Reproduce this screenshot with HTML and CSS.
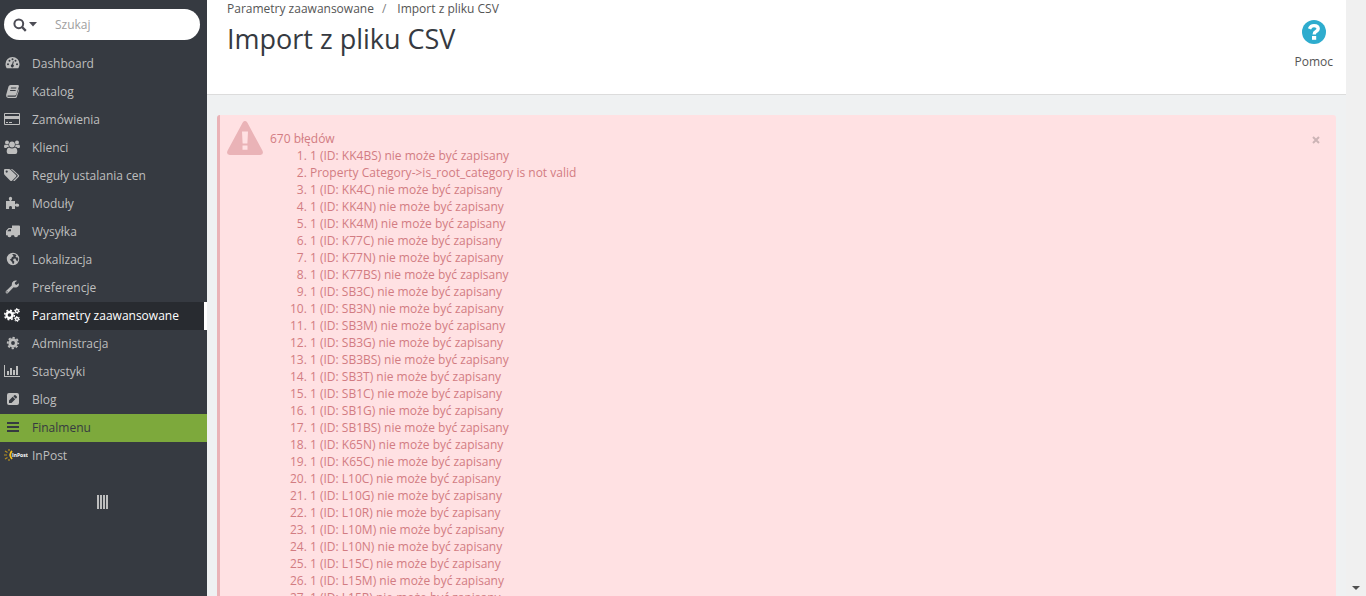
FILE: index.html
```html
<!DOCTYPE html>
<html lang="pl">
<head>
    <meta charset="UTF-8">
    <meta name="viewport" content="width=device-width, initial-scale=1.0">
    <title>Import z pliku CSV</title>
    <link rel="stylesheet" href="styles.css">
</head>
<body>

<nav class="sidebar">
    <form class="search">
        <button type="button" class="search-type" aria-label="Szukaj w">
            <svg width="14" height="14" viewBox="0 0 14 14"><circle cx="5.8" cy="5.8" r="4.4" fill="none" stroke="currentColor" stroke-width="2"/><path d="M9 9l3.800 3.800" stroke="currentColor" stroke-width="2.400"/></svg>
            <svg width="8" height="5" viewBox="0 0 8 5"><path d="M0 0h8L4 4.500z" fill="currentColor"/></svg>
        </button>
        <input type="text" class="search-input" placeholder="Szukaj" aria-label="Szukaj">
    </form>

    <ul class="menu">
        <li><a href="#">
            <svg class="icon" viewBox="0 0 16 14"><path fill-rule="evenodd" d="M8.500 1a7 7 0 0 1 7 7c0 1.700-.4 3-1.200 4.300H2.700C1.900 11 1.500 9.700 1.500 8a7 7 0 0 1 7-7zM4 7.200a1 1 0 1 0 0 2 1 1 0 0 0 0-2zM5.500 3.700a1 1 0 1 0 0 2 1 1 0 0 0 0-2zM8.500 2.200a1 1 0 1 0 0 2 1 1 0 0 0 0-2zM11.500 3.700a1 1 0 1 0 0 2 1 1 0 0 0 0-2zM13 7.200a1 1 0 1 0 0 2 1 1 0 0 0 0-2zM8.900 5.200L8.100 8.300a1.500 1.500 0 1 0 1 .2l.8-3z"/></svg>
            Dashboard</a></li>
        <li><a href="#">
            <svg class="icon" viewBox="0 0 16 14"><path fill-rule="evenodd" d="M6.500 1H14q1.300.2.900 1.500l-2.600 8q-.3 1-1.500 1H4q-.8 0-.6.700.2.500 1 .5h6.700q.7 0 1-.8L14.800 5q.5.300.3 1l-2.300 7q-.3.900-1.300.9H4Q1.800 13.500 2.100 11L4.500 2.500Q5 1 6.500 1zM7 3.500l-.3 1h5.500l.3-1zM6.300 6L6 7h5.500l.3-1z"/></svg>
            Katalog</a></li>
        <li><a href="#">
            <svg class="icon" viewBox="0 0 16 14"><path fill-rule="evenodd" d="M1 1h14q1 0 1 1v10q0 1-1 1H1q-1 0-1-1V2q0-1 1-1zM1 2v2h14V2zM1 7v5h14V7zM2 10h2v1H2zM5 10h3v1H5z"/></svg>
            Zamówienia</a></li>
        <li><a href="#">
            <svg class="icon" viewBox="0 0 16 14"><circle cx="3" cy="2.500" r="2"/><circle cx="13" cy="2.500" r="2"/><circle cx="8" cy="4.500" r="2.900"/><path d="M1 4.500q2 1 3.500 0Q4.300 6.500 5.200 7H4Q2.800 7.200 2.500 8H1.200Q0 8 0 6.800 0 5 1 4.500zM15 4.500q-2 1-3.500 0 .2 2-.7 2.500H12q1.200.2 1.500 1h1.300Q16 8 16 6.800q0-1.800-1-2.300zM5 7.500q3 2 6 0 2.300.5 2.300 4.300 0 2.200-2 2.200H4.700q-2 0-2-2.200Q2.700 8 5 7.500z"/></svg>
            Klienci</a></li>
        <li><a href="#">
            <svg class="icon" viewBox="0 0 16 14"><path fill-rule="evenodd" d="M0 2q0-1 1-1h4q.8 0 1.500.7L12 7q.9.800 0 1.700L8 12.700q-.8.800-1.700 0L.7 7Q0 6.300 0 5.500zM2.700 2.500a1.100 1.100 0 1 0 0 2.200 1.100 1.100 0 0 0 0-2.200z"/><path d="M6.800 1h.8q.8 0 1.500.7L14.800 7q.9.800 0 1.700l-4.200 4.200q-.7.500-1.400-.2l4.200-4.200q.7-.8 0-1.500z"/></svg>
            Reguły ustalania cen</a></li>
        <li><a href="#">
            <svg class="icon" viewBox="0 0 16 14"><path d="M2 5h4q-1.200-1-1.200-2.400Q5 .8 6.500.8t1.700 1.800Q8.200 4 7 5h4v3.500q.8-1 1.800-1 2.400 0 2.400 1.700t-2.200 1.600q-1 0-2-1v3.200H7.800q.7-3-1.300-3t-1.300 3H2z"/></svg>
            Moduły</a></li>
        <li><a href="#">
            <svg class="icon" viewBox="0 0 16 14"><path fill-rule="evenodd" d="M8 1.500h7q1 0 1 1v8q0 .8-1 .8h-1a2 2 0 0 1-4 0H7.500a2 2 0 0 1-4 0H2V6.800L4.600 4H8zM7 5.200H5L3.300 7.200H7z"/></svg>
            Wysyłka</a></li>
        <li><a href="#">
            <svg class="icon" viewBox="0 0 16 14"><path fill-rule="evenodd" d="M9 .8a6.200 6.200 0 1 1 0 12.400A6.200 6.200 0 0 1 9 .8zM8 2.200q2.500-.5 4.500 1l-1 1.400 1 .9 1-.3.900 1.800-1 2.500-1.400-1.600-.5-1.400-1.800.3-.7 1.400 1.300 1.300-.3 2-1.200.4-.8-1.800-2.200-2.600 1.500-.8.7-1.700 1.500-.5-.3-1.300z"/></svg>
            Lokalizacja</a></li>
        <li><a href="#">
            <svg class="icon" viewBox="0 0 16 14"><path fill-rule="evenodd" d="M14.700 3.200q.8 2.800-1.700 4-1.600.8-3.400 0L4 12.900q-1 1-2 0-1-1 0-2l5.700-5.500Q7.400 2.400 9.600 1q1.900-1 3.600-.2L10.900 2.500v1.600l1.500.8zM3 11.300a.6.600 0 1 0 .1 1.200.6.600 0 0 0-.1-1.200z"/></svg>
            Preferencje</a></li>
        <li class="active"><a href="#">
            <svg class="icon" viewBox="0 0 16 14"><g fill="none" stroke="currentColor"><circle cx="5.500" cy="7" r="3" stroke-width="2.400"/><circle cx="5.500" cy="7" r="4.800" stroke-width="1.600" stroke-dasharray="1.900 1.870"/><circle cx="13" cy="3" r="1.500" stroke-width="1.300"/><circle cx="13" cy="3" r="2.500" stroke-width="1" stroke-dasharray="1.300 1.318"/><circle cx="13" cy="11" r="1.500" stroke-width="1.300"/><circle cx="13" cy="11" r="2.500" stroke-width="1" stroke-dasharray="1.300 1.318"/></g></svg>
            Parametry zaawansowane</a></li>
        <li><a href="#">
            <svg class="icon" viewBox="0 0 16 14"><g fill="none" stroke="currentColor"><circle cx="9" cy="7" r="3.300" stroke-width="2.800"/><circle cx="9" cy="7" r="5.300" stroke-width="1.700" stroke-dasharray="2.300 1.863" stroke-dashoffset="1.150"/></g></svg>
            Administracja</a></li>
        <li><a href="#">
            <svg class="icon" viewBox="0 0 16 14"><path d="M0 1h1v11h15v1H0zM3 7h2v4H3zM6 4h2v7H6zM9 6h2v5H9zM12 2h2v9h-2z"/></svg>
            Statystyki</a></li>
        <li><a href="#">
            <svg class="icon" viewBox="0 0 16 14"><path fill-rule="evenodd" d="M5 1h8q2 0 2 2v8q0 2-2 2H5q-2 0-2-2V3q0-2 2-2zM5 8.500V11h2.500l3.700-3.700-2.500-2.500zM9.300 4.200l2.500 2.500 1-1q.6-.6 0-1.200l-1.300-1.300q-.6-.6-1.200 0z"/></svg>
            Blog</a></li>
        <li class="highlight"><a href="#">
            <svg class="icon" viewBox="0 0 16 14"><path d="M3 2h12v2H3zM3 6h12v2H3zM3 10h12v2H3z"/></svg>
            Finalmenu</a></li>
        <li><a href="#">
            <svg class="icon icon-inpost" viewBox="0 0 24 14"><path d="M8 3q-3.500 3.500 0 8" fill="none" stroke="#f0be1c" stroke-width="1.800"/><path d="M5 1v2M1 3l2.500 1.500M0 7h3M1 11l2.500-1.500M5 13v-2" stroke="#b58f22" stroke-width="1.200"/><text x="8" y="9" font-size="5" font-weight="700" fill="#fff">InPost</text></svg>
            InPost</a></li>
    </ul>

    <button type="button" class="collapse" aria-label="Zwiń menu"><i></i><i></i><i></i><i></i></button>
</nav>

<main class="content">
    <header class="page-head">
        <div>
            <ol class="breadcrumb">
                <li><a href="#">Parametry zaawansowane</a></li>
                <li><a href="#">Import z pliku CSV</a></li>
            </ol>
            <h1>Import z pliku CSV</h1>
        </div>
        <a href="#" class="help">
            <svg width="24" height="24" viewBox="0 0 24 24"><circle cx="12" cy="12" r="12" fill="#2eacce"/><path d="M7.500 8.900Q8.700 5.600 12 5.600q4.200 0 4.200 3.200 0 1.600-2.100 2.700-1.900 1-1.900 2.900" fill="none" stroke="#fff" stroke-width="3.400"/><path d="M10 16h4.200v3.800H10z" fill="#fff"/></svg>
            <span>Pomoc</span>
        </a>
    </header>

    <section class="alert">
        <svg class="alert-icon" viewBox="0 0 36 34"><path fill-rule="evenodd" d="M15.700 1.500Q18-1.400 20.300 1.500L35.500 29.800Q37 33.600 33.300 34H2.700Q-1 33.600.5 29.800zM15 10.500l.6 12h4.800l.6-12zM15.500 24.500v4.300h5v-4.300z"/></svg>
        <div class="alert-body">
            670 błędów
            <ol class="errors">
                <li>1 (ID: KK4BS) nie może być zapisany</li>
                <li>Property Category-&gt;is_root_category is not valid</li>
                <li>1 (ID: KK4C) nie może być zapisany</li>
                <li>1 (ID: KK4N) nie może być zapisany</li>
                <li>1 (ID: KK4M) nie może być zapisany</li>
                <li>1 (ID: K77C) nie może być zapisany</li>
                <li>1 (ID: K77N) nie może być zapisany</li>
                <li>1 (ID: K77BS) nie może być zapisany</li>
                <li>1 (ID: SB3C) nie może być zapisany</li>
                <li>1 (ID: SB3N) nie może być zapisany</li>
                <li>1 (ID: SB3M) nie może być zapisany</li>
                <li>1 (ID: SB3G) nie może być zapisany</li>
                <li>1 (ID: SB3BS) nie może być zapisany</li>
                <li>1 (ID: SB3T) nie może być zapisany</li>
                <li>1 (ID: SB1C) nie może być zapisany</li>
                <li>1 (ID: SB1G) nie może być zapisany</li>
                <li>1 (ID: SB1BS) nie może być zapisany</li>
                <li>1 (ID: K65N) nie może być zapisany</li>
                <li>1 (ID: K65C) nie może być zapisany</li>
                <li>1 (ID: L10C) nie może być zapisany</li>
                <li>1 (ID: L10G) nie może być zapisany</li>
                <li>1 (ID: L10R) nie może być zapisany</li>
                <li>1 (ID: L10M) nie może być zapisany</li>
                <li>1 (ID: L10N) nie może być zapisany</li>
                <li>1 (ID: L15C) nie może być zapisany</li>
                <li>1 (ID: L15M) nie może być zapisany</li>
                <li>1 (ID: L15R) nie może być zapisany</li>
            </ol>
        </div>
        <button type="button" class="close" aria-label="Zamknij"><svg width="8" height="8" viewBox="0 0 8 8"><path d="M1 1l6 6M7 1L1 7" stroke="currentColor" stroke-width="2"/></svg></button>
    </section>
</main>

<div class="scrollbar"><span class="scroll-down"></span></div>

</body>
</html>
```

FILE: styles.css
```css
* {
    box-sizing: border-box;
}
body {
    display: flex;
    height: 100vh;
    margin: 0;
    overflow: hidden;
    font-family: "Open Sans", sans-serif;
    font-size: 12px;
    line-height: 17px;
    color: #555;
    background: #eff1f2;
}
a {
    color: inherit;
    text-decoration: none;
}
button {
    padding: 0;
    border: none;
    background: none;
    cursor: pointer;
}
ul, ol {
    margin: 0;
    padding: 0;
}

/* left menu */
.sidebar {
    flex: 0 0 207px;
    min-width: 0;
    padding-top: 9px;
    background: #363a41;
    color: #bebebe;
}
.search {
    display: flex;
    height: 31px;
    margin: 0 7px 10px 4px;
    padding-left: 9px;
    border-radius: 16px;
    background: #fff;
}
.search-type {
    display: flex;
    align-items: center;
    gap: 2px;
    color: #4c4c55;
}
.search-input {
    flex: 1;
    min-width: 0;
    padding: 0 18px;
    border: none;
    outline: none;
    background: none;
    font: inherit;
}
.search-input::placeholder {
    color: #a0a0a0;
}
.menu {
    list-style: none;
}
.menu a {
    display: flex;
    align-items: center;
    height: 28px;
    padding: 0 0 2px 4px;
}
.icon {
    width: 16px;
    height: 14px;
    margin-right: 12px;
    fill: currentColor;
}
.icon-inpost {
    width: 24px;
    margin-right: 4px;
}
.menu .active {
    border-right: 3px solid #fff;
    background: #282b30;
    color: #fff;
}
.menu .highlight {
    background: #7da93c;
    color: #363a41;
}
.collapse {
    display: flex;
    gap: 1px;
    margin: 25px auto 0 97px;
}
.collapse i {
    width: 2px;
    height: 14px;
    background: #bebebe;
}

/* page */
.content {
    flex: 1;
    min-width: 0;
}
.page-head {
    display: flex;
    justify-content: space-between;
    height: 95px;
    padding: 0 13px 0 20px;
    border-bottom: 1px solid #dcdcdc;
    background: #fff;
}
.breadcrumb {
    display: flex;
    list-style: none;
}
.breadcrumb li + li::before {
    content: "/";
    padding: 0 11px 0 8px;
    color: #808080;
}
h1 {
    margin: 4px 0 0;
    font-size: 27px;
    font-weight: 400;
    line-height: 36px;
    color: #363a41;
}
.help {
    display: flex;
    flex-direction: column;
    align-items: center;
    gap: 9px;
    padding-top: 20px;
}
.alert {
    display: flex;
    align-items: flex-start;
    margin: 20px 10px;
    padding: 6px 16px 16px 7px;
    border-left: 3px solid #eab3b7;
    border-radius: 3px;
    background: #ffe1e3;
    color: #d27c82;
}
.alert-icon {
    width: 36px;
    height: 34px;
    margin-right: 7px;
    fill: #eab3b7;
}
.alert-body {
    flex: 1;
    padding-top: 9px;
}
.errors {
    padding-left: 40px;
}
.close {
    margin-top: 15px;
    color: #ccb4b6;
}
.close svg {
    display: block;
}

/* scroll track */
.scrollbar {
    display: flex;
    flex: 0 0 20px;
    align-items: flex-end;
    justify-content: center;
    padding-bottom: 6px;
    background: #f0f0f0;
}
.scroll-down {
    border: 4px solid transparent;
    border-top-color: #505050;
    border-bottom: none;
}
```
